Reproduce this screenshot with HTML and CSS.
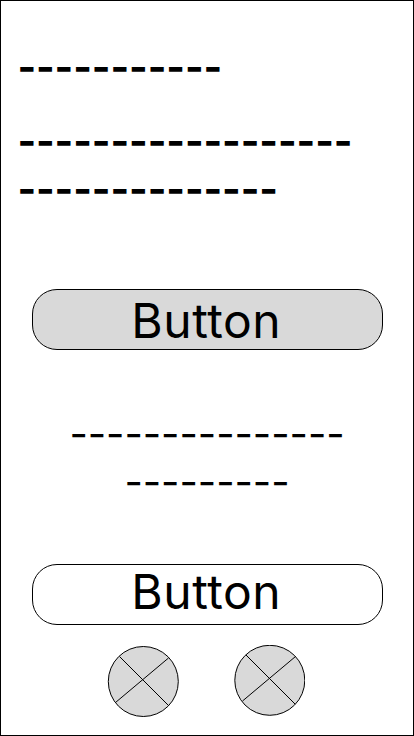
FILE: index.html
```html
<!DOCTYPE html>
<html lang="en">
<head>
<meta charset="utf-8">
<title>Wireframe</title>
<link rel="stylesheet" href="styles.css">
</head>
<body>
<main class="screen">
  <h1 class="title">-----------</h1>
  <p class="lead">------------------<br>--------------</p>
  <button class="button button-primary">Button</button>
  <p class="note">---------------<br>---------</p>
  <button class="button button-secondary">Button</button>
  <div class="icons">
    <svg class="icon" width="72" height="72" viewBox="0 0 72 72"><circle cx="36.300" cy="35.500" r="35"/><path d="M12.500 10.500L61.500 59.500M61.500 12L8.500 56.500"/></svg>
    <svg class="icon icon-raised" width="72" height="72" viewBox="0 0 72 72"><circle cx="36.800" cy="35.300" r="35"/><path d="M13 10L62 59M62.500 11.500L9.500 56"/></svg>
  </div>
</main>
</body>
</html>
```

FILE: styles.css
```css
* { box-sizing: border-box; }
body { margin: 0; }
.screen {
  width: 414px;
  height: 736px;
  border: 1px solid #000;
  background: #fff;
  color: #000;
  font-family: Inter, sans-serif;
  font-size: 40px;
  line-height: 48px;
  display: flex;
  flex-direction: column;
  overflow: hidden;
}
.title, .lead, .note { margin: 0; white-space: nowrap; }
.title, .lead {
  margin-left: 16.4px;
  font-size: 40px;
  font-weight: 700;
  letter-spacing: -0.1px;
}
.title { margin-top: 42px; }
.lead { margin-top: 26px; }
.button {
  width: 351px;
  height: 61px;
  flex-shrink: 0;
  margin-left: 31px;
  padding: 0 2.5px 0 0;
  border: 1px solid #000;
  border-radius: 25px;
  font: 400 48px/48px Inter, sans-serif;
  letter-spacing: 0.55px;
  color: #000;
}
.button-primary { margin-top: 76px; padding-top: 2px; background: #d9d9d9; }
.note { margin-top: 60px; text-align: center; letter-spacing: -0.05px; }
.button-secondary { margin-top: 58px; padding-bottom: 6px; background: #fff; }
.icons { display: flex; gap: 54px; margin: 20px 0 0 106px; }
.icon { fill: #d9d9d9; stroke: #000; stroke-width: 1; margin-top: 1px; }
.icon-raised { margin-top: 0; }
```
